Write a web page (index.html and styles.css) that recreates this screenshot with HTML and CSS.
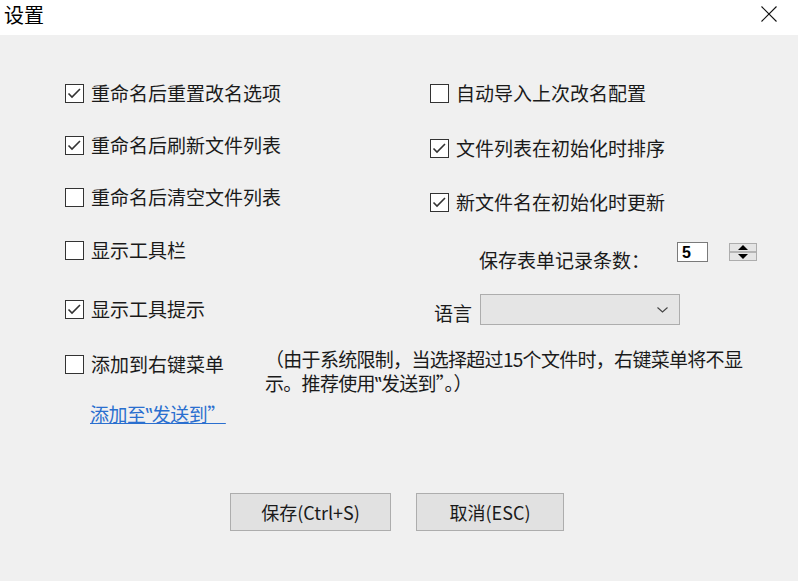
FILE: index.html
```html
<!DOCTYPE html>
<html lang="zh-CN">
<head>
<meta charset="utf-8">
<title>设置</title>
<link rel="stylesheet" href="styles.css">
</head>
<body>
<div class="window">
  <div class="titlebar">
    <span class="title">设置</span>
    <svg class="close" width="16" height="16" viewBox="0 0 16 16"><path d="M0.5 0.5 L15.5 15.5 M15.5 0.5 L0.5 15.5" stroke="#111" stroke-width="1.1" fill="none"/></svg>
  </div>
  <div class="content">
    <div class="columns">
      <div class="col col-left">
        <label class="check r1"><span class="box checked"><svg viewBox="0 0 17 17" width="17" height="17"><path d="M2.5 8.5 L6 12 L14 4" stroke="#333" stroke-width="1.6" fill="none"/></svg></span><span class="text">重命名后重置改名选项</span></label>
        <label class="check r2"><span class="box checked"><svg viewBox="0 0 17 17" width="17" height="17"><path d="M2.5 8.5 L6 12 L14 4" stroke="#333" stroke-width="1.6" fill="none"/></svg></span><span class="text">重命名后刷新文件列表</span></label>
        <label class="check r3"><span class="box"></span><span class="text">重命名后清空文件列表</span></label>
        <label class="check r4"><span class="box"></span><span class="text">显示工具栏</span></label>
        <label class="check r5"><span class="box checked"><svg viewBox="0 0 17 17" width="17" height="17"><path d="M2.5 8.5 L6 12 L14 4" stroke="#333" stroke-width="1.6" fill="none"/></svg></span><span class="text">显示工具提示</span></label>
      </div>
      <div class="col col-right">
        <label class="check"><span class="box"></span><span class="text">自动导入上次改名配置</span></label>
        <label class="check rr2"><span class="box checked"><svg viewBox="0 0 17 17" width="17" height="17"><path d="M2.5 8.5 L6 12 L14 4" stroke="#333" stroke-width="1.6" fill="none"/></svg></span><span class="text">文件列表在初始化时排序</span></label>
        <label class="check rr3"><span class="box checked"><svg viewBox="0 0 17 17" width="17" height="17"><path d="M2.5 8.5 L6 12 L14 4" stroke="#333" stroke-width="1.6" fill="none"/></svg></span><span class="text">新文件名在初始化时更新</span></label>
        <div class="spin-row">
          <span class="spin-label">保存表单记录条数：</span>
          <span class="numbox">5</span>
          <span class="spinner">
            <span class="spin-up"></span>
            <span class="spin-down"></span>
          </span>
        </div>
        <div class="lang-row">
          <span class="lang-label">语言</span>
          <span class="combo">
            <svg class="chev" width="11" height="6" viewBox="0 0 11 6"><path d="M0.5 0.5 L5.5 5 L10.5 0.5" stroke="#444" stroke-width="1.1" fill="none"/></svg>
          </span>
        </div>
      </div>
    </div>
    <div class="context-row">
      <label class="check ctx"><span class="box"></span><span class="text">添加到右键菜单</span></label>
      <p class="note">（由于系统限制，当选择超过15个文件时，右键菜单将不显示。推荐使用‟发送到”。）</p>
    </div>
    <a class="link" href="#">添加至‟发送到”</a>
    <div class="buttons">
      <button class="btn btn-save">保存(Ctrl+S)</button>
      <button class="btn btn-cancel">取消(ESC)</button>
    </div>
  </div>
</div>
</body>
</html>
```
FILE: styles.css
```css
* { box-sizing: border-box; }
html, body {
  margin: 0;
  padding: 0;
  width: 798px;
  height: 581px;
  overflow: hidden;
  background: #f0f0f0;
  font-family: "Noto Sans CJK SC", "Noto Sans", sans-serif;
  color: #1a1a1a;
}
.window { width: 798px; height: 581px; display: flex; flex-direction: column; }
.titlebar {
  height: 35px;
  background: #ffffff;
  display: flex;
  align-items: center;
  justify-content: space-between;
  padding: 0 21px 0 4px;
  flex-shrink: 0;
}
.title { font-size: 20px; line-height: 28px; color: #000; margin-top: -6px; }
.close { margin-top: -7px; }
.content {
  flex: 1;
  display: flex;
  flex-direction: column;
  padding-top: 45px;
}
.columns { display: flex; }
.col { display: flex; flex-direction: column; }
.col-left { width: 430px; padding-left: 65px; }
.col-right { flex: 1; }

.check {
  display: flex;
  align-items: center;
  height: 26px;
  font-size: 19px;
  line-height: 26px;
  white-space: nowrap;
}
.box {
  width: 19px;
  height: 19px;
  border: 1px solid #333;
  background: #fff;
  flex-shrink: 0;
  display: block;
}
.box svg { display: block; }
.text { margin-left: 7px; }

.r2, .r3 { margin-top: 26px; }
.r4 { margin-top: 27px; }
.r5 { margin-top: 33px; }

.rr2 { margin-top: 29px; }
.rr3 { margin-top: 28px; }

.spin-row {
  display: flex;
  align-items: flex-start;
  height: 30px;
  margin-top: 27px;
}
.spin-label {
  font-size: 19px;
  line-height: 26px;
  margin-left: 49px;
  margin-top: 5px;
  width: 198px;
  white-space: nowrap;
}
.numbox {
  width: 31px;
  height: 20px;
  background: #fff;
  border: 1px solid #7a7a7a;
  font-family: "Liberation Sans", sans-serif;
  font-weight: bold;
  font-size: 16px;
  line-height: 20px;
  padding-left: 4px;
  color: #000;
}
.spinner {
  margin-left: 21px;
  margin-top: 1px;
  width: 28px;
  height: 18px;
  border: 1px solid #adadad;
  background: #e5e5e5;
  display: flex;
  flex-direction: column;
}
.spin-up, .spin-down {
  flex: 1;
  display: flex;
  align-items: center;
  justify-content: center;
}
.spin-up { border-bottom: 2px solid #b4b4b4; }
.spin-up::before {
  content: "";
  border-left: 5px solid transparent;
  border-right: 5px solid transparent;
  border-bottom: 5px solid #000;
}
.spin-down::before {
  content: "";
  border-left: 5px solid transparent;
  border-right: 5px solid transparent;
  border-top: 5px solid #000;
}

.lang-row {
  display: flex;
  align-items: flex-start;
  margin-top: 22px;
  height: 30px;
}
.lang-label {
  font-size: 19px;
  line-height: 26px;
  margin-left: 4px;
  margin-top: 6px;
  width: 46px;
}
.combo {
  width: 200px;
  height: 31px;
  background: #e5e5e5;
  border: 1px solid #adadad;
  display: flex;
  align-items: center;
  justify-content: flex-end;
  padding-right: 11px;
}

.context-row {
  display: flex;
  align-items: flex-start;
  margin-top: 27px;
  padding-left: 65px;
}
.ctx { width: 200px; }
.note {
  margin: -4px 0 0 0;
  width: 487px;
  font-size: 19px;
  line-height: 24px;
  letter-spacing: -0.7px;
}
.link {
  margin: 7px 0 0 90px;
  align-self: flex-start;
  font-size: 19px;
  line-height: 24px;
  color: #2a6fcf;
  text-decoration: underline;
  letter-spacing: -0.5px;
}
.buttons {
  display: flex;
  justify-content: center;
  gap: 25px;
  margin-top: 67px;
  padding-right: 4px;
}
.btn {
  height: 38px;
  background: #e1e1e1;
  border: 1px solid #adadad;
  font-family: "Noto Sans CJK SC", "Noto Sans", sans-serif;
  font-size: 18px;
  color: #1a1a1a;
  padding: 0;
}
.btn-save { width: 161px; }
.btn-cancel { width: 148px; }
```
